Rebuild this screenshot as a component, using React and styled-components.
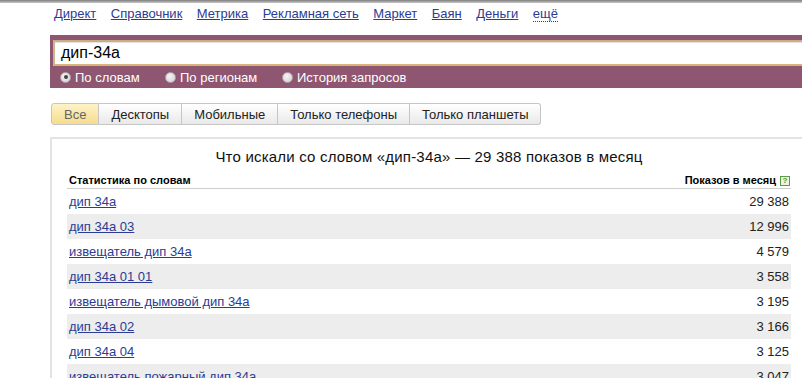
import React from 'react'
import styled, { createGlobalStyle } from 'styled-components'

const LINK = '#2b3c94'
const PURPLE = '#8e5671'

const GlobalStyle = createGlobalStyle`
  html, body {
    margin: 0;
    padding: 0;
    overflow: hidden;
    background: #fff;
  }
  body {
    font-family: Arial, "Liberation Sans", sans-serif;
    font-size: 13px;
    color: #000;
  }
`

const Page = styled.div`
  width: 820px;
`

const TopStrip = styled.div`
  height: 3px;
  background: linear-gradient(#7d7d7d, #c9c9c9);
`

const Nav = styled.nav`
  display: flex;
  gap: 14.5px;
  height: 32px;
  box-sizing: border-box;
  padding: 3px 0 0 54px;
  line-height: 16px;
`

const NavLink = styled.a`
  color: ${LINK};
  text-decoration: ${p => (p.$dotted ? 'none' : 'underline')};
  border-bottom: ${p => (p.$dotted ? `1px dotted ${LINK}` : 'none')};
  height: ${p => (p.$dotted ? '15px' : 'auto')};
  cursor: pointer;
`

const SearchBand = styled.div`
  margin-left: 50px;
  height: 53px;
  box-sizing: border-box;
  padding: 5px 0 0 3px;
  background: ${PURPLE};
`

const QueryInput = styled.div`
  height: 26px;
  box-sizing: border-box;
  padding-left: 6px;
  background: #fff;
  border-top: 2px solid #c9ae84;
  border-bottom: 2px solid #d8b47c;
  border-left: 2px solid #cdb58e;
  box-shadow: inset 0 1px 1px rgba(0, 0, 0, 0.12);
  font-size: 16px;
  line-height: 22px;
  color: #000;
`

const Modes = styled.div`
  display: flex;
  align-items: center;
  height: 22px;
  padding-left: 7px;
`

const Mode = styled.label`
  display: flex;
  align-items: center;
  gap: 4px;
  width: ${p => p.$w}px;
  color: #fff;
  font-size: 13px;
`

const Radio = styled.span`
  position: relative;
  width: 11px;
  height: 11px;
  box-sizing: border-box;
  border-radius: 50%;
  background: radial-gradient(circle at 40% 35%, #f4f4f4, #cfcfcf);
  border: 1px solid #b9a3ad;

  &::after {
    content: '';
    display: ${p => (p.$on ? 'block' : 'none')};
    position: absolute;
    left: 2.5px;
    top: 2.5px;
    width: 4px;
    height: 4px;
    border-radius: 50%;
    background: #444;
  }
`

const Tabs = styled.div`
  display: flex;
  margin: 15px 0 0 51px;
  height: 22px;
`

const Tab = styled.div`
  display: flex;
  align-items: center;
  padding: 0 12px;
  box-sizing: border-box;
  border: 1px solid #c6c6c6;
  border-left-width: ${p => (p.$first ? 1 : 0)}px;
  border-radius: ${p => (p.$first ? '3px 0 0 3px' : p.$last ? '0 3px 3px 0' : '0')};
  background: ${p =>
    p.$active
      ? 'linear-gradient(#fdf3c8, #f7dc8e)'
      : 'linear-gradient(#ffffff, #e9e9e9)'};
  color: ${p => (p.$active ? '#666' : '#222')};
  font-size: 13px;
  white-space: nowrap;
`

const Panel = styled.section`
  margin: 12px 0 0 50px;
  width: 724px;
  border-top: 2px solid #e3e3e3;
  border-left: 2px solid #e3e3e3;
  padding: 0 40px 0 15px;
`

const Title = styled.h2`
  margin: 0;
  padding-top: 9px;
  font-size: 15px;
  font-weight: normal;
  line-height: 18px;
  letter-spacing: 0.2px;
  text-align: center;
  color: #111;
`

const Head = styled.div`
  display: flex;
  justify-content: space-between;
  align-items: center;
  padding: 8px 2px 1px 2px;
  line-height: 13px;
  font-size: 11px;
  font-weight: bold;
  border-bottom: 1px solid #cfcfcf;
`

const HeadRight = styled.span`
  display: flex;
  align-items: center;
  gap: 4px;
  margin-right: -1px;
`

const Help = styled.span`
  display: inline-flex;
  align-items: center;
  justify-content: center;
  width: 10px;
  height: 10px;
  box-sizing: border-box;
  border: 1px solid #5c9a45;
  background: #e9f5dc;
  color: #4d8f35;
  font-size: 8px;
  font-weight: bold;
  line-height: 1;
`

const Row = styled.div`
  display: flex;
  justify-content: space-between;
  align-items: center;
  height: 25px;
  padding: 0 2px;
  background: ${p => (p.$odd ? '#ededed' : '#fff')};
  font-size: 13px;
`

const Phrase = styled.a`
  color: ${LINK};
  text-decoration: underline;
  cursor: pointer;
`

const Count = styled.span`
  color: #222;
`

const navItems = ['Директ', 'Справочник', 'Метрика', 'Рекламная сеть', 'Маркет', 'Баян', 'Деньги']

const tabs = ['Все', 'Десктопы', 'Мобильные', 'Только телефоны', 'Только планшеты']

const rows = [
  ['дип 34а', '29 388'],
  ['дип 34а 03', '12 996'],
  ['извещатель дип 34а', '4 579'],
  ['дип 34а 01 01', '3 558'],
  ['извещатель дымовой дип 34а', '3 195'],
  ['дип 34а 02', '3 166'],
  ['дип 34а 04', '3 125'],
  ['извещатель пожарный дип 34а', '3 047'],
]

const App = () => (
  <Page>
    <GlobalStyle />
    <TopStrip />
    <Nav>
      {navItems.map(item => (
        <NavLink key={item}>{item}</NavLink>
      ))}
      <NavLink $dotted>ещё</NavLink>
    </Nav>
    <SearchBand>
      <QueryInput>дип-34а</QueryInput>
      <Modes>
        <Mode $w={105}>
          <Radio $on />
          По словам
        </Mode>
        <Mode $w={117}>
          <Radio />
          По регионам
        </Mode>
        <Mode $w={140}>
          <Radio />
          История запросов
        </Mode>
      </Modes>
    </SearchBand>
    <Tabs>
      {tabs.map((label, i) => (
        <Tab key={label} $active={i === 0} $first={i === 0} $last={i === tabs.length - 1}>
          {label}
        </Tab>
      ))}
    </Tabs>
    <Panel>
      <Title>Что искали со словом «дип-34а» — 29 388 показов в месяц</Title>
      <Head>
        <span>Статистика по словам</span>
        <HeadRight>
          Показов в месяц
          <Help>?</Help>
        </HeadRight>
      </Head>
      {rows.map(([phrase, count], i) => (
        <Row key={phrase} $odd={i % 2 === 1}>
          <Phrase>{phrase}</Phrase>
          <Count>{count}</Count>
        </Row>
      ))}
    </Panel>
  </Page>
)

export default App
